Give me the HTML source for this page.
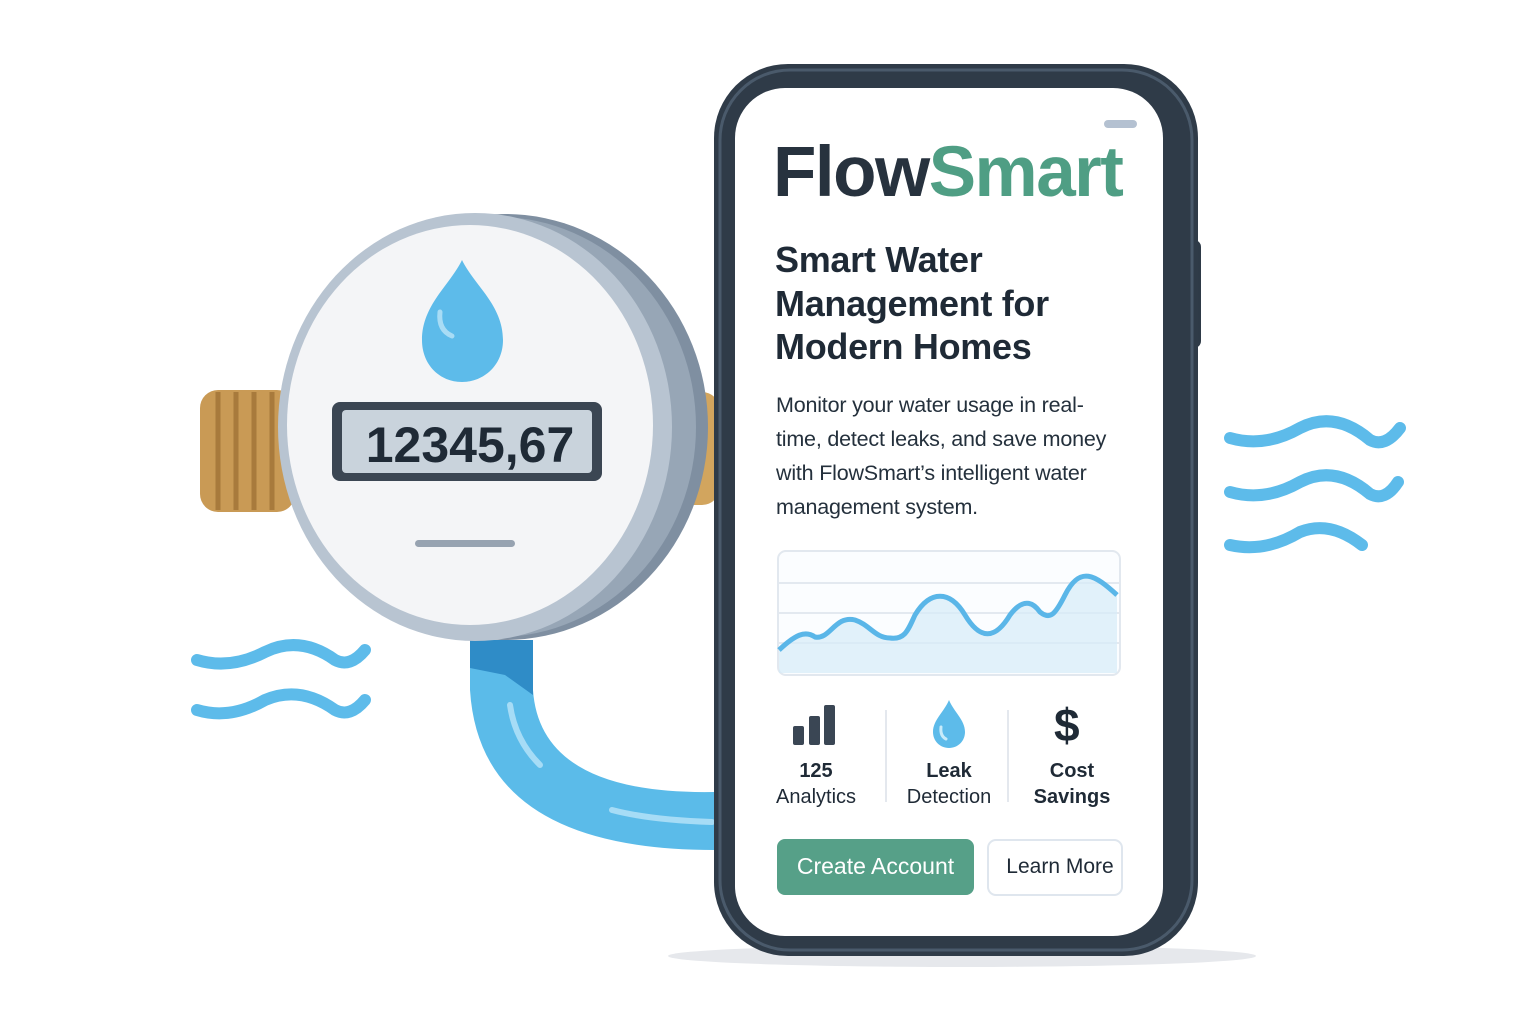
<!DOCTYPE html>
<html><head><meta charset="utf-8"><style>
html,body{margin:0;padding:0;background:#fff;width:1536px;height:1024px;overflow:hidden;font-family:"Liberation Sans",sans-serif;color:#1f2a36}
.a{position:absolute;white-space:nowrap}
</style></head><body>
<svg width="1536" height="1024" style="position:absolute;left:0;top:0">
<ellipse cx="962" cy="956" rx="294" ry="11" fill="#e6e8ec"/>
<path d="M470 640 L470 690 Q480 850 714 850 L714 792 Q540 795 533 690 L533 640 Z" fill="#5bbbe9"/>
<path d="M470 640 L533 640 L533 695 L505 675 L470 668 Z" fill="#2f8cc7"/>
<path d="M510 705 Q515 740 540 765" stroke="#a6dcf6" stroke-width="6" fill="none" stroke-linecap="round"/>
<path d="M612 810 Q650 820 712 822" stroke="#a6dcf6" stroke-width="6" fill="none" stroke-linecap="round"/>
<rect x="200" y="390" width="95" height="122" rx="18" fill="#c99a55"/>
<g stroke="#a87a3c" stroke-width="5" fill="none"><path d="M218 392v118M236 392v118M254 392v118M272 392v118"/></g>
<rect x="660" y="392" width="60" height="113" rx="18" fill="#d2a55e"/>
<rect x="672" y="392" width="18" height="113" rx="9" fill="#8a5a22"/>
<ellipse cx="505" cy="427" rx="203" ry="213" fill="#7f8fa1"/>
<ellipse cx="498" cy="427" rx="198" ry="210" fill="#97a6b6"/>
<ellipse cx="475" cy="427" rx="197" ry="214" fill="#b8c4d1"/>
<ellipse cx="470" cy="425" rx="183" ry="200" fill="#f4f5f7"/>
<path d="M462 260 C450 285 422 305 422 340 C422 365 440 382 462 382 C484 382 503 365 503 340 C503 305 474 285 462 260 Z" fill="#5dbbea"/>
<path d="M440 312 Q438 330 452 336" stroke="#a8dcf5" stroke-width="5" fill="none" stroke-linecap="round"/>
<rect x="332" y="402" width="270" height="79" rx="8" fill="#3b4653"/>
<rect x="342" y="410" width="250" height="63" rx="4" fill="#c9d3dc"/>
<text x="470" y="462" font-family="Liberation Sans" font-size="50" font-weight="bold" text-anchor="middle" fill="#1f2a36">12345,67</text>
<rect x="415" y="540" width="100" height="7" rx="3.5" fill="#97a3b1"/>
<g stroke="#5dbbea" stroke-width="12" fill="none" stroke-linecap="round">
<path d="M197 660 Q230 670 265 652 Q300 635 335 660 Q350 668 365 650"/>
<path d="M197 710 Q230 720 265 700 Q300 685 335 710 Q350 718 365 700"/>
<path d="M1230 438 Q1265 448 1300 428 Q1335 410 1370 440 Q1385 448 1400 428"/>
<path d="M1230 492 Q1265 502 1300 482 Q1335 464 1370 494 Q1385 502 1398 482"/>
<path d="M1230 545 Q1265 553 1300 532 Q1330 520 1362 545"/>
</g>
<rect x="1184" y="240" width="17" height="108" rx="7" fill="#2e3a47"/>
<rect x="714" y="64" width="484" height="892" rx="74" fill="#2f3b48"/>
<rect x="720" y="70" width="472" height="880" rx="70" fill="none" stroke="#4a5a6b" stroke-width="3"/>
<rect x="735" y="88" width="428" height="848" rx="50" fill="#fff"/>
<rect x="1104" y="120" width="33" height="8" rx="4" fill="#b4c1d1"/>
<rect x="778" y="551" width="342" height="124" rx="8" fill="#fbfdff" stroke="#e2e8ef" stroke-width="2"/>
<g stroke="#e3e9f0" stroke-width="2"><path d="M779 583H1119M779 613H1119M779 643H1119"/></g>
<path d="M779 650 C795 635 805 630 815 637 C830 640 835 615 855 620 C870 625 875 638 890 638 C905 640 908 630 915 615 C930 590 950 590 965 615 C980 640 995 640 1010 615 C1025 595 1035 605 1040 612 C1050 620 1055 615 1065 595 C1080 565 1095 575 1117 595 L1117 673 L779 673 Z" fill="#d6ebf8" opacity=".7"/>
<path d="M779 650 C795 635 805 630 815 637 C830 640 835 615 855 620 C870 625 875 638 890 638 C905 640 908 630 915 615 C930 590 950 590 965 615 C980 640 995 640 1010 615 C1025 595 1035 605 1040 612 C1050 620 1055 615 1065 595 C1080 565 1095 575 1117 595" stroke="#5ab6e8" stroke-width="5" fill="none"/>
<rect x="793" y="726" width="11" height="19" rx="2" fill="#3a4654"/>
<rect x="809" y="716" width="11" height="29" rx="2" fill="#3a4654"/>
<rect x="824" y="705" width="11" height="40" rx="2" fill="#3a4654"/>
<path d="M949 700 C944 712 933 720 933 732 C933 741 940 748 949 748 C958 748 965 741 965 732 C965 720 954 712 949 700 Z" fill="#5dbbea"/>
<path d="M941 727 Q940 736 946 739" stroke="#c8ebfa" stroke-width="3" fill="none" stroke-linecap="round"/>
<rect x="885" y="710" width="2" height="92" fill="#e4e8ee"/>
<rect x="1007" y="710" width="2" height="92" fill="#e4e8ee"/>
<rect x="777" y="839" width="197" height="56" rx="8" fill="#56a088"/>
<rect x="988" y="840" width="134" height="55" rx="8" fill="#fff" stroke="#dfe6ee" stroke-width="2"/>
</svg>
<div class="a" style="left:773px;top:132px;font-size:71px;font-weight:bold;letter-spacing:-1.5px;color:#27323e">Flow<span style="color:#4f9e84">Smart</span></div>
<div class="a" style="left:775px;top:238px;font-size:36px;line-height:43.5px;font-weight:bold;color:#1f2a36;letter-spacing:-0.3px">Smart Water<br>Management for<br>Modern Homes</div>
<div class="a" style="left:776px;top:388px;font-size:21.5px;line-height:34px;color:#24303c;letter-spacing:-0.2px">Monitor your water usage in real-<br>time, detect leaks, and save money<br>with FlowSmart’s intelligent water<br>management system.</div>
<div class="a" style="left:1054px;top:698px;font-size:46px;font-weight:bold;color:#1f2a36">$</div>
<div class="a" style="left:766px;top:758px;width:100px;text-align:center;font-size:20px;line-height:26px"><b>125</b><br>Analytics</div>
<div class="a" style="left:899px;top:758px;width:100px;text-align:center;font-size:20px;line-height:26px"><b>Leak</b><br>Detection</div>
<div class="a" style="left:1022px;top:758px;width:100px;text-align:center;font-size:20px;line-height:26px;font-weight:bold">Cost<br>Savings</div>
<div class="a" style="left:777px;top:853px;width:197px;text-align:center;font-size:23px;color:#fff">Create Account</div>
<div class="a" style="left:988px;top:855px;width:144px;text-align:center;font-size:21px;color:#1f2a36">Learn More</div>
</body></html>
